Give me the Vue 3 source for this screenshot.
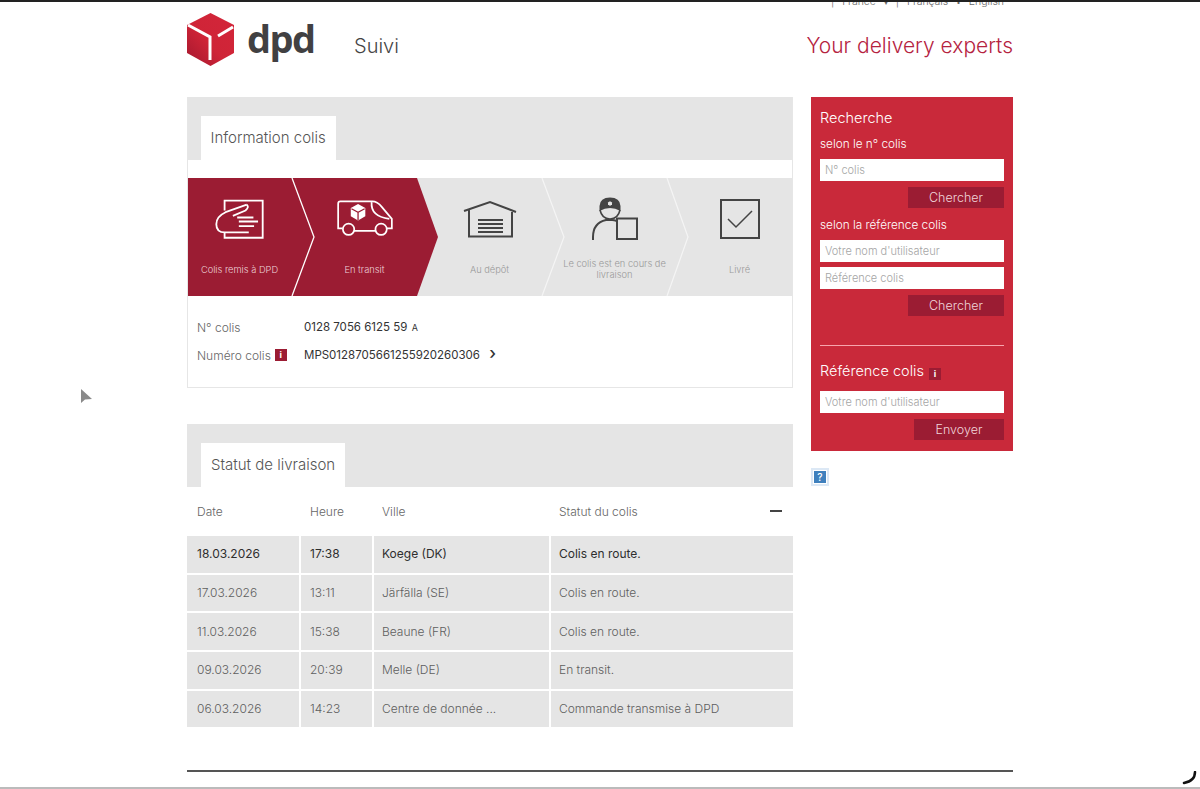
<template>
  <div class="page">
    <div class="lang-bar">
      <span>|</span><span>France</span><span class="caret">▾</span><span>|</span><span>Français</span><span class="dot">•</span><span>English</span>
    </div>

    <header class="header">
      <svg class="logo" viewBox="0 0 47 53" width="47" height="53">
        <defs>
          <linearGradient id="cube" x1="0" y1="1" x2="1" y2="0">
            <stop offset="0" stop-color="#a3182f" />
            <stop offset="0.45" stop-color="#cf2437" />
            <stop offset="1" stop-color="#d3263a" />
          </linearGradient>
        </defs>
        <polygon points="23.5,0 47,12 47,40 23.5,53 0,40 0,12" fill="url(#cube)" />
        <path d="M1 12 L23 24 V47 M31 23 L46 14" fill="none" stroke="#fff" stroke-width="3" />
      </svg>
      <span class="wordmark">dpd</span>
      <span class="page-title">Suivi</span>
      <span class="tagline">Your delivery experts</span>
    </header>

    <div class="columns">
      <main class="main">
        <section class="panel info">
          <div class="tabs"><h2 class="tab">Information colis</h2></div>
          <div class="steps">
            <svg class="chevrons" viewBox="0 0 605 118" width="605" height="118">
              <polygon points="0,0 229,0 250,59 229,118 0,118" fill="#9b1c33" />
              <path d="M104 0 L126 59 L104 118" fill="none" stroke="#fff" stroke-width="1.3" />
              <path d="M354 0 L376 59 L354 118 M479 0 L500 59 L479 118" fill="none" stroke="#f5f5f5" stroke-width="1.2" />
            </svg>
            <div v-for="(step, i) in steps" :key="step.label" class="step" :class="{ done: i < 2 }">
              <div class="step-icon">
                <svg v-if="i === 0" viewBox="80 85 160 125" width="53" height="42" fill="none" stroke="#fff" stroke-width="5.5">
                  <path d="M115 122 V92 H230 V204 H115 V190" />
                  <path d="M182 104 L118 127 Q90 140 90 163 Q90 188 116 188 H188" />
                  <path d="M182 104 Q190 112 178 122 L140 138 M153 143 H202 M158 155 H216 M158 169 H204" />
                </svg>
                <svg v-else-if="i === 1" viewBox="440 88 190 125" width="60" height="40" fill="none" stroke="#fff" stroke-width="5.5">
                  <path d="M464 180 H450 V102 Q450 95 457 95 H558 Q574 95 588 112 L620 150 V180 H604" />
                  <path d="M500 188 H568 M556 97 Q552 142 612 150" />
                  <circle cx="483" cy="183" r="18" />
                  <circle cx="586" cy="183" r="18" />
                  <polygon points="513,103 536,116 536,142 513,155 490,142 490,116" fill="#fff" stroke="none" />
                  <path d="M492 118 L513 129 L534 118 M513 129 V154" stroke="#9b1c33" stroke-width="4" />
                </svg>
                <svg v-else-if="i === 2" viewBox="464 200 54 38" width="54" height="38" fill="none" stroke="#444" stroke-width="2">
                  <path d="M465 211 L491 202 L517 212 M470 210 V236.500 H513 V212" />
                  <path d="M479 220 H504 M479 224 H504 M479 228 H504 M479 232 H504" />
                </svg>
                <svg v-else-if="i === 3" viewBox="590 198 50 44" width="50" height="44" fill="none" stroke="#444" stroke-width="2">
                  <path d="M600 211 Q602 220 610 220 Q618 220 620 211" stroke-width="1.600" />
                  <path d="M599.500 212 V207 Q600 198.500 610 198.500 Q620 198.500 620.500 207 V212 Q610 206 599.500 212 Z" fill="#444" stroke="none" />
                  <polygon points="610,201 613,203 613,206 610,208 607,206 607,203" fill="#e5e5e5" />
                  <path d="M593 241 V238 Q593 224 606 221 H612 Q614 221 617 222" />
                  <rect x="617" y="219.500" width="20" height="20.500" />
                </svg>
                <svg v-else viewBox="720 198 42 42" width="42" height="42" fill="none" stroke="#444">
                  <rect x="722" y="200" width="38" height="38" stroke-width="2" />
                  <path d="M729 219 L737 227 L753 211" stroke-width="1.500" />
                </svg>
              </div>
              <div class="step-label">{{ step.label }}</div>
            </div>
          </div>
          <dl class="details">
            <div class="detail">
              <dt>N° colis</dt>
              <dd>0128 7056 6125 59 <small>A</small></dd>
            </div>
            <div class="detail">
              <dt>Numéro colis <i class="info-badge">i</i></dt>
              <dd>MPS0128705661255920260306 <span class="more">›</span></dd>
            </div>
          </dl>
        </section>

        <section class="panel status">
          <div class="tabs"><h2 class="tab">Statut de livraison</h2></div>
          <div class="table">
            <div class="table-row table-head">
              <div>Date</div>
              <div>Heure</div>
              <div>Ville</div>
              <div class="status-head">Statut du colis<span class="collapse"></span></div>
            </div>
            <div v-for="(row, i) in rows" :key="row.date" class="table-row body-row" :class="{ latest: i === 0 }">
              <div>{{ row.date }}</div>
              <div>{{ row.time }}</div>
              <div>{{ row.city }}</div>
              <div>{{ row.status }}</div>
            </div>
          </div>
        </section>
      </main>

      <aside class="side">
        <div class="search">
          <h3>Recherche</h3>
          <p>selon le n° colis</p>
          <input placeholder="N° colis" />
          <button class="wide">Chercher</button>
          <p class="second">selon la référence colis</p>
          <input placeholder="Votre nom d'utilisateur" />
          <input placeholder="Référence colis" />
          <button class="wide">Chercher</button>
          <hr />
          <h3 class="ref">Référence colis <i class="info-badge dark">i</i></h3>
          <input placeholder="Votre nom d'utilisateur" />
          <button>Envoyer</button>
        </div>
        <div class="help"><span>?</span></div>
      </aside>
    </div>

    <div class="footer-line"></div>

    <svg class="cursor" viewBox="0 0 12 15" width="12" height="15"><polygon points="0,0 11,10 4,10.500 0,14" fill="#8a8a8a" /></svg>
    <svg class="spinner" viewBox="0 0 16 14" width="16" height="14"><path d="M13 1 Q13 10 2 12" fill="none" stroke="#111" stroke-width="2.500" stroke-linecap="round" /></svg>
  </div>
</template>

<script setup>
const steps = [
  { label: 'Colis remis à DPD' },
  { label: 'En transit' },
  { label: 'Au dépôt' },
  { label: 'Le colis est en cours de livraison' },
  { label: 'Livré' }
]

const rows = [
  { date: '18.03.2026', time: '17:38', city: 'Koege (DK)', status: 'Colis en route.' },
  { date: '17.03.2026', time: '13:11', city: 'Järfälla (SE)', status: 'Colis en route.' },
  { date: '11.03.2026', time: '15:38', city: 'Beaune (FR)', status: 'Colis en route.' },
  { date: '09.03.2026', time: '20:39', city: 'Melle (DE)', status: 'En transit.' },
  { date: '06.03.2026', time: '14:23', city: 'Centre de donnée ...', status: 'Commande transmise à DPD' }
]
</script>

<style>
html, body { margin: 0; background: #fff; }
</style>

<style scoped>
.page {
  position: relative;
  width: 1200px;
  height: 789px;
  box-sizing: border-box;
  overflow: hidden;
  background: #fff;
  border-top: 2px solid #222;
  border-bottom: 2px solid #bbb;
  font-family: Inter, "Liberation Sans", sans-serif;
  font-weight: 300;
  color: #555;
}

.lang-bar {
  display: flex;
  justify-content: flex-end;
  gap: 8px;
  height: 8px;
  margin: -7px 196px 0 0;
  font-size: 10.500px;
  line-height: 14px;
  color: #666;
}
.caret, .dot { font-size: 8px; }

.header {
  display: flex;
  align-items: flex-start;
  width: 826px;
  height: 94px;
  margin-left: 187px;
  padding-top: 10px;
  box-sizing: border-box;
}
.logo { flex: none; }
.wordmark {
  width: 63px;
  margin: 2px 0 0 13px;
  font-family: "Open Sans", sans-serif;
  font-size: 38px;
  font-weight: 700;
  line-height: 46px;
  letter-spacing: -1.500px;
  color: #414042;
}
.page-title {
  margin: 21px 0 0 44px;
  font-size: 20px;
  line-height: 24px;
  color: #444;
}
.tagline {
  margin: 21px 0 0 auto;
  font-size: 21px;
  line-height: 24px;
  color: #b5233f;
}

.columns {
  display: flex;
  align-items: flex-start;
  gap: 18px;
  margin-left: 187px;
}
.main { width: 606px; }

.panel { border: 1px solid #e6e6e6; border-top: 0; }
.info { height: 291px; box-sizing: border-box; }
.status { margin-top: 36px; border: 0; }

.tabs {
  height: 63px;
  padding: 19px 0 0 14px;
  box-sizing: border-box;
  background: #e5e5e5;
}
.info .tabs { padding-left: 13px; }
.tab {
  display: inline-block;
  height: 44px;
  margin: 0;
  padding: 0 10px;
  background: #fff;
  font-size: 15px;
  font-weight: 300;
  line-height: 43px;
  color: #555;
}
.info .tab { padding: 0 10.500px 0 9.500px; }

.steps {
  position: relative;
  display: grid;
  grid-template-columns: repeat(5, 125px);
  height: 118px;
  margin: 18px 0 0 0;
  background: #e5e5e5;
  overflow: hidden;
}
.chevrons { position: absolute; left: 0; top: 0; }
.step {
  position: relative;
  left: -11px;
  display: flex;
  flex-direction: column;
  align-items: center;
}
.step-icon {
  display: flex;
  align-items: center;
  justify-content: center;
  height: 82px;
}
.step-label {
  display: flex;
  align-items: center;
  height: 22px;
  width: 108px;
  margin-top: -2px;
  justify-content: center;
  text-align: center;
  font-size: 9.300px;
  line-height: 11px;
  color: #999;
}
.step.done .step-label { color: #ecd0d6; }

.details { margin: 0; padding: 17px 9px 0; }
.detail { display: flex; align-items: center; height: 28px; }
dt { display: flex; align-items: center; gap: 4px; width: 107px; font-size: 12px; color: #666; }
dd { margin: 0; font-size: 11.500px; font-weight: 400; color: #333; }
dd small { font-size: 9px; margin-left: 1px; }
.more { margin-left: 6px; font-size: 17px; line-height: 10px; font-weight: 500; }
.info-badge {
  display: inline-block;
  width: 12px;
  height: 12px;
  background: #9b1c33;
  color: #fff;
  font-size: 9px;
  font-style: normal;
  font-weight: 700;
  line-height: 12px;
  text-align: center;
}
.info-badge.dark { vertical-align: -1px; margin-left: 1px; }

.table { font-size: 12px; }
.table-row {
  display: grid;
  grid-template-columns: 112px 71px 175px 242px;
  column-gap: 2px;
}
.table-row > div {
  display: flex;
  align-items: center;
  padding: 0 8px 1px;
  white-space: nowrap;
}
.table-row > div:first-child { padding-left: 10px; }
.table-row > div:nth-child(2) { padding-left: 9px; }
.table-head { height: 49px; color: #666; }
.table-row > .status-head { justify-content: space-between; padding-right: 11px; }
.collapse { display: block; width: 12px; height: 2.500px; background: #444; }
.body-row { height: 36.700px; margin-bottom: 2px; color: #5e5e5e; }
.body-row > div { background: #e5e5e5; }
.latest { font-weight: 400; color: #2e2e2e; }

.side { width: 202px; }
.search {
  display: flex;
  flex-direction: column;
  height: 354px;
  box-sizing: border-box;
  padding: 12px 9px 0;
  background: #c9293a;
  color: #fff;
}
h3 { margin: 0; font-size: 14.500px; font-weight: 300; line-height: 18px; }
p { margin: 9px 0 0; font-size: 11.800px; line-height: 16px; }
input {
  height: 22px;
  margin-top: 5px;
  padding: 0 5px;
  box-sizing: border-box;
  border: 0;
  outline: 0;
  background: #fff;
  font: 300 11px Inter, "Liberation Sans", sans-serif;
}
p + input { margin-top: 7px; }
input::placeholder { color: #a5a5a5; opacity: 1; }
button {
  align-self: flex-end;
  width: 90px;
  height: 21px;
  margin-top: 6px;
  padding: 0;
  border: 0;
  background: #9b1c33;
  color: #f0d5da;
  font: 300 12.500px Inter, "Liberation Sans", sans-serif;
}
button.wide { width: 96px; }
hr { width: 100%; height: 1px; margin: 29px 0 0; border: 0; background: #f7a5ad; }
.ref { margin-top: 16px; }
.ref + input { margin-top: 11px; }
.help {
  display: flex;
  align-items: center;
  justify-content: center;
  width: 18px;
  height: 18px;
  margin-top: 17px;
  box-sizing: border-box;
  border: 2px solid #dce8f5;
}
.help span {
  width: 12px;
  height: 12px;
  background: #3f80bd;
  color: #fff;
  font-size: 10px;
  font-weight: 500;
  line-height: 12px;
  text-align: center;
}

.footer-line {
  position: absolute;
  left: 187px;
  top: 768px;
  width: 826px;
  height: 2px;
  background: #555;
}
.cursor { position: absolute; left: 81px; top: 387px; }
.spinner { position: absolute; left: 1182px; top: 769px; }
</style>
